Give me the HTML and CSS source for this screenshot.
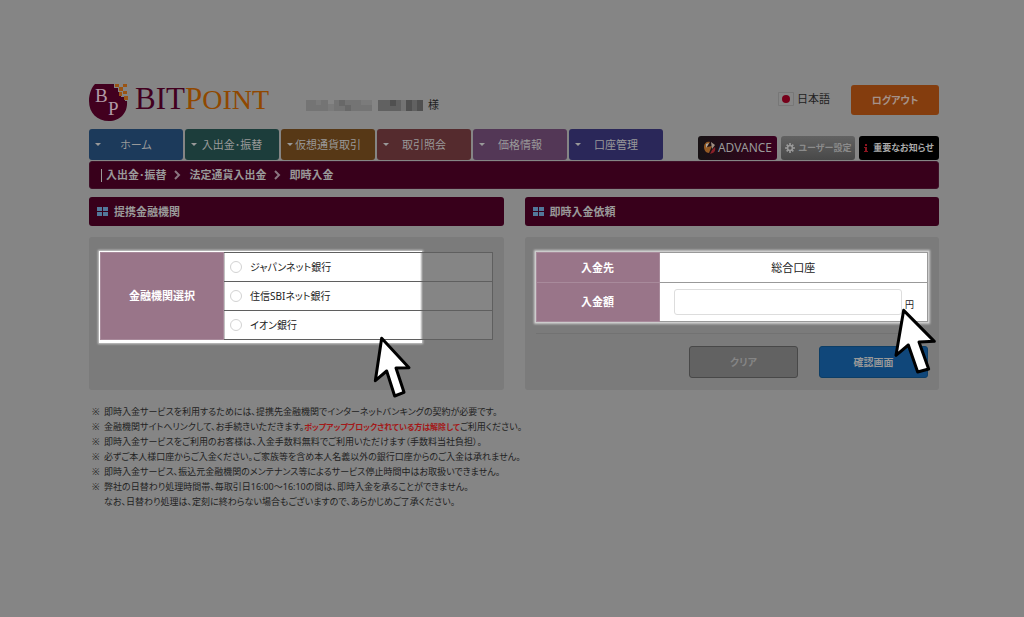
FILE: index.html
```html
<!DOCTYPE html>
<html lang="ja">
<head>
<meta charset="utf-8">
<meta name="viewport" content="width=device-width, initial-scale=1">
<title>BITPoint 即時入金</title>
<link rel="stylesheet" href="styles.css">
</head>
<body>
<div class="page">
  <header class="header">
    <a class="logo" href="#">
      <svg class="logo-mark" viewBox="0 0 40 40" aria-hidden="true">
        <path d="M6 1H25V5H29V9H32V14H36V18H38C39 30 31 38 20 38C8 38 0 30 0 18C0 10 3 4 6 1Z" fill="#42001f"/>
        <g fill="#9a5414"><path d="M26 1h4v3h-4zM34 1h4v3h-4zM30 4h4v4h-4zM34 8h4v3h-4zM30 9h3v4h-3zM35 13h4v4h-4z"/></g>
        <g fill="#b09aa5" font-family="Liberation Serif, serif" font-size="19"><text x="6" y="19">B</text><text x="19" y="32">P</text></g>
      </svg>
      <span class="logo-name">BIT<span class="logo-accent">P<small>OINT</small></span></span>
    </a>
    <div class="user">
      <svg class="mask" viewBox="0 0 118 11" aria-hidden="true">
        <path fill="#747474" d="M0 0h22v11H0zM28 0h38v11H28z"/><path fill="#7b7b7b" d="M22 4h6v7h-6zM10 0h5v5h-5zM55 0h11v5H55z"/><path fill="#686868" d="M33 0h6v6h-6zM39 5h6v6h-6z"/>
        <path fill="#616161" d="M72 0h45v11H72z"/><path fill="#505050" d="M84 0h6v6h-6zM100 0h6v11h-6zM111 0h6v11h-6z"/><path fill="#737373" d="M95 0h5v11h-5z"/>
      </svg>
      <span>様</span>
    </div>
    <a class="language" href="#">
      <svg class="flag" viewBox="0 0 16 14" aria-hidden="true"><path d="M.5.5h15v13H.5z" fill="#868686" stroke="#777"/><circle cx="8" cy="7" r="4" fill="#76001a"/></svg>
      日本語
    </a>
    <button class="logout" type="button">ログアウト</button>
  </header>

  <div class="navbar">
    <nav class="tabs">
      <a class="tab tab-home" href="#">ホーム</a>
      <a class="tab tab-transfer" href="#">入出金･振替</a>
      <a class="tab tab-crypto" href="#">仮想通貨取引</a>
      <a class="tab tab-history" href="#">取引照会</a>
      <a class="tab tab-price" href="#">価格情報</a>
      <a class="tab tab-account" href="#">口座管理</a>
    </nav>
    <div class="tools">
      <a class="tool tool-advance" href="#">
        <svg class="advance-icon" viewBox="0 0 14 14" aria-hidden="true"><path d="M1 6C1 2 4 0 7 1L4 6L9 5L6 12C3 12 1 9 1 6Z" fill="#945a24"/><path d="M8 1L12 4L9 8Z" fill="#a09084"/><path d="M7 13C11 12 13 10 12 6L9 9Z" fill="#8a2028"/><path d="M3 3L6 2L3 7Z" fill="#aaa"/></svg>ADVANCE</a>
      <a class="tool tool-settings" href="#">
        <svg class="gear" viewBox="0 0 12 12" aria-hidden="true"><circle cx="6" cy="6" r="3" fill="none" stroke="#999" stroke-width="2"/><path d="M6 0v3M6 9v3M0 6h3M9 6h3M2 2l2 2M8 8l2 2M10 2L8 4M4 8l-2 2" stroke="#999" stroke-width="2"/></svg>ユーザー設定</a>
      <a class="tool tool-news" href="#">
        <svg class="info" viewBox="0 0 4 10" aria-hidden="true"><path d="M1 1h2v2H1zM0 4h3v4h1v1H0V8h1V5H0z" fill="#8b1520"/></svg>重要なお知らせ</a>
    </div>
  </div>

  <nav class="breadcrumb" aria-label="現在位置">
    <span class="crumb-bar"></span>
    <a href="#">入出金･振替</a>
    <svg class="chevron" viewBox="0 0 7 10" aria-hidden="true"><path d="M1 1l4 4-4 4"/></svg>
    <a href="#">法定通貨入出金</a>
    <svg class="chevron" viewBox="0 0 7 10" aria-hidden="true"><path d="M1 1l4 4-4 4"/></svg>
    <span>即時入金</span>
  </nav>

  <main class="columns">
    <section class="column">
      <h2 class="title"><svg class="grid-icon" viewBox="0 0 11 10" aria-hidden="true"><path d="M0 0h5v4H0zM6 0h5v4H6zM0 5h5v4H0zM6 5h5v4H6z"/></svg>提携金融機関</h2>
      <div class="panel">
        <div class="spot spot-banks">
          <table class="form-table banks">
            <tr><th rowspan="3" scope="rowgroup">金融機関選択</th><td><label class="bank"><input type="radio" name="bank">ジャパンネット銀行</label></td></tr>
            <tr><td><label class="bank"><input type="radio" name="bank">住信SBIネット銀行</label></td></tr>
            <tr><td><label class="bank"><input type="radio" name="bank">イオン銀行</label></td></tr>
          </table>
        </div>
        <svg class="pointer pointer-banks" viewBox="0 0 120 192" aria-hidden="true"><path d="M29 10L111 98L72 99L96 172L68 183L44 108L10 137Z"/></svg>
      </div>
    </section>

    <section class="column">
      <h2 class="title"><svg class="grid-icon" viewBox="0 0 11 10" aria-hidden="true"><path d="M0 0h5v4H0zM6 0h5v4H6zM0 5h5v4H0zM6 5h5v4H6z"/></svg>即時入金依頼</h2>
      <form class="panel">
        <div class="spot spot-amount">
          <table class="form-table amount">
            <tr><th scope="row">入金先</th><td class="destination">総合口座</td></tr>
            <tr><th scope="row"><label for="amount">入金額</label></th><td><div class="amount-field"><input id="amount" type="text"><span>円</span></div></td></tr>
          </table>
        </div>
        <div class="actions">
          <button class="action clear" type="reset">クリア</button>
          <button class="action confirm" type="button">確認画面</button>
        </div>
        <svg class="pointer pointer-amount" viewBox="0 0 135 207" aria-hidden="true"><path d="M32 13L124 106L78 108L107 189L74 198L46 117L9 148Z"/></svg>
      </form>
    </section>
  </main>

  <ul class="notes">
    <li>即時入金サービスを利用するためには、提携先金融機関でインターネットバンキングの契約が必要です。</li>
    <li>金融機関サイトへリンクして、お手続きいただきます。<strong>ポップアップブロックされている方は解除して</strong>ご利用ください。</li>
    <li>即時入金サービスをご利用のお客様は、入金手数料無料でご利用いただけます（手数料当社負担）。</li>
    <li>必ずご本人様口座からご入金ください。ご家族等を含め本人名義以外の銀行口座からのご入金は承れません。</li>
    <li>即時入金サービス、振込元金融機関のメンテナンス等によるサービス停止時間中はお取扱いできません。</li>
    <li>弊社の日替わり処理時間帯、毎取引日16:00～16:10の間は、即時入金を承ることができません。<br>なお、日替わり処理は、定刻に終わらない場合もございますので、あらかじめご了承ください。</li>
  </ul>
</div>
</body>
</html>
```
FILE: styles.css
```css
* { box-sizing: border-box; }

body {
  margin: 0;
  background: #858585;
  color: #222;
  font: 11px/16px "Noto Sans", "Noto Sans CJK JP", sans-serif;
  font-feature-settings: "palt";
}

a { color: inherit; text-decoration: none; }
button, input { font: inherit; font-feature-settings: inherit; }

.page { padding: 83px 85px 24px 89px; }

.header { display: flex; align-items: flex-start; height: 46px; }
.logo { display: flex; gap: 6px; }
.logo-mark { width: 40px; height: 40px; }
.logo-name { color: #42001f; font: 31px/32px "Liberation Serif", serif; }
.logo-accent { color: #904800; }
.logo-accent small { font-size: 28px; }
.user { display: flex; align-items: center; gap: 4px; margin: 14px auto 0 37px; }
.mask { width: 118px; height: 11px; }
.language { display: flex; align-items: center; gap: 3px; margin: 8px 21px 0 0; }
.flag { width: 16px; height: 14px; }
.logout {
  width: 88px;
  height: 30px;
  margin-top: 2px;
  padding: 0;
  border: 0;
  border-radius: 3px;
  background: #843d0e;
  color: #a5928a;
  font-size: 10px;
  font-weight: 700;
}

.navbar { display: flex; align-items: flex-end; justify-content: space-between; }
.tabs { display: flex; gap: 2px; }
.tab {
  position: relative;
  width: 94px;
  padding: 8px 0 7px;
  border-radius: 3px;
  color: #999;
  text-align: center;
}
.tab::before {
  content: "";
  position: absolute;
  left: 6px;
  top: 14px;
  border: 3px solid transparent;
  border-top-color: #999;
}
.tab-home { background: #1c3a5b; }
.tab-transfer { background: #1c3d3b; }
.tab-crypto { background: #573816; }
.tab-history { background: #552b2e; }
.tab-price { background: #533756; }
.tab-account { background: #2a2759; }

.tools { display: flex; gap: 4px; }
.tool {
  display: flex;
  align-items: center;
  justify-content: center;
  height: 24px;
  border-radius: 3px;
  font-size: 9px;
  font-weight: 700;
}
.tool-advance { width: 79px; gap: 1px; background: linear-gradient(90deg, #171214, #3b0020); color: #999; font-size: 12px; font-weight: 400; }
.advance-icon { width: 14px; height: 14px; }
.tool-settings { width: 74px; gap: 4px; background: linear-gradient(#626262, #484848); color: #8b8b8b; }
.gear { width: 10px; height: 10px; }
.tool-news { width: 80px; gap: 5px; background: #000; color: #aaa; }
.info { width: 4px; height: 10px; }

.breadcrumb {
  display: flex;
  align-items: center;
  gap: 7px;
  margin-top: 1px;
  padding: 5px 11px;
  border: 1px solid #3f1028;
  border-radius: 3px;
  background: #38001b;
  color: #999;
  font-weight: 700;
}
.crumb-bar { width: 1px; height: 13px; margin-right: -3px; background: #999; }
.chevron { width: 7px; height: 10px; margin-right: 2px; fill: none; stroke: #8a7580; stroke-width: 2; }

.columns { display: grid; grid-template-columns: 1fr 1fr; gap: 21px; margin-top: 8px; }
.column { display: flex; flex-direction: column; gap: 11px; }
.title {
  display: flex;
  align-items: center;
  gap: 6px;
  margin: 0;
  padding: 6px 8px;
  border-radius: 3px;
  background: #38001b;
  color: #999;
  font-size: 11px;
  line-height: 17px;
}
.grid-icon { width: 11px; height: 10px; fill: #52789a; }
.panel { position: relative; flex: 1; padding: 15px 11px 12px; border-radius: 3px; background: #7b7b7b; }

/* Highlighted area of a panel, drawn behind the table */
.spot { position: relative; isolation: isolate; }
.spot::before {
  content: "";
  position: absolute;
  z-index: -1;
  inset: -1px;
  background: #ccc;
  box-shadow: 0 0 2px 1px #ccc;
}
.spot-banks::before { right: 71px; bottom: -3px; background: #fff; }

.form-table { width: 100%; border-collapse: collapse; }
.form-table th {
  width: 123px;
  padding: 0;
  border: 1px solid #a88a9b;
  background: #997589;
  color: #fff;
  font-weight: 700;
}
.form-table td { padding: 0; border: 1px solid #999; background: #fff; }
.banks td {
  height: 29px;
  border-color: #5f5f5f;
  background: linear-gradient(90deg, #fff 73%, #858585 74%);
}
.bank { display: flex; align-items: center; gap: 8px; padding-left: 6px; font-size: 10px; }
.bank input {
  appearance: none;
  width: 12px;
  height: 12px;
  margin: 0;
  border: 1px solid #d2d2d2;
  border-radius: 50%;
  background: #fff;
}
.destination { height: 30px; text-align: center; }
.amount-field { display: flex; align-items: flex-end; gap: 3px; padding: 6px 13px 6px 14px; font-size: 9px; line-height: 20px; }
.amount-field input {
  flex: 1;
  min-width: 0;
  height: 26px;
  border: 1px solid #ddd;
  border-radius: 3px;
  background: #fff;
  font-size: 11px;
}

.actions {
  display: flex;
  justify-content: flex-end;
  gap: 21px;
  margin-top: 11px;
  padding-top: 12px;
  border-top: 1px solid #727272;
}
.action { width: 109px; height: 32px; padding: 0; border: 1px solid #484848; border-radius: 3px; font-size: 10px; font-weight: 700; }
.clear { background: #626262; color: #858585; }
.confirm { border-color: #0d3e66; background: #10477a; color: #999; }

.pointer { position: absolute; fill: #fff; stroke: #000; stroke-width: 9; stroke-linejoin: round; }
.pointer-banks { left: 283px; top: 98px; width: 40px; height: 64px; }
.pointer-amount { right: 1px; top: 69px; width: 45px; height: 69px; }

.notes {
  margin: 14px 0 0;
  padding: 0 0 0 15px;
  list-style: none;
  font-size: 9px;
  line-height: 15px;
}
.notes li::before { content: "※"; float: left; width: 12px; margin-left: -12px; }
.notes strong { color: #a31818; font-size: 8px; }
```
